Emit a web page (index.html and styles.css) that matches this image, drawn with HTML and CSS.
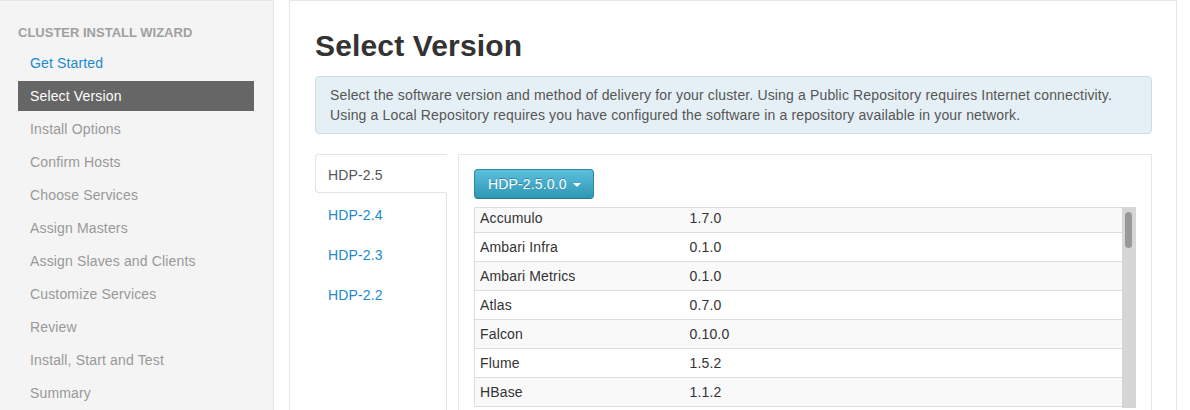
FILE: index.html
```html
<!DOCTYPE html>
<html lang="en">
<head>
    <meta charset="UTF-8">
    <title>Cluster Install Wizard</title>
    <link rel="stylesheet" href="styles.css">
</head>
<body>
    <div id="page">
        <div id="sidebar">
            <div class="nav-header">Cluster Install Wizard</div>
            <ul class="steps">
                <li class="done">Get Started</li>
                <li class="active">Select Version</li>
                <li>Install Options</li>
                <li>Confirm Hosts</li>
                <li>Choose Services</li>
                <li>Assign Masters</li>
                <li>Assign Slaves and Clients</li>
                <li>Customize Services</li>
                <li>Review</li>
                <li>Install, Start and Test</li>
                <li>Summary</li>
            </ul>
        </div>

        <div id="content">
            <h1>Select Version</h1>
            <div class="alert">
                Select the software version and method of delivery for your cluster. Using a Public Repository requires Internet connectivity.
                Using a Local Repository requires you have configured the software in a repository available in your network.
            </div>

            <div class="tabs">
                <ul class="tab-list">
                    <li class="active"><a>HDP-2.5</a></li>
                    <li><a>HDP-2.4</a></li>
                    <li><a>HDP-2.3</a></li>
                    <li><a>HDP-2.2</a></li>
                </ul>

                <div class="tab-pane">
                    <button class="btn-info">HDP-2.5.0.0 <span class="caret"></span></button>

                    <div class="stack-box">
                        <div class="stack-scroll">
                            <table class="stack">
                                <colgroup>
                                    <col class="name-col">
                                    <col>
                                </colgroup>
                                <tbody>
                                    <tr class="first"><td>Accumulo</td><td>1.7.0</td></tr>
                                    <tr><td>Ambari Infra</td><td>0.1.0</td></tr>
                                    <tr><td>Ambari Metrics</td><td>0.1.0</td></tr>
                                    <tr><td>Atlas</td><td>0.7.0</td></tr>
                                    <tr><td>Falcon</td><td>0.10.0</td></tr>
                                    <tr><td>Flume</td><td>1.5.2</td></tr>
                                    <tr><td>HBase</td><td>1.1.2</td></tr>
                                </tbody>
                            </table>
                        </div>
                        <div class="scrollbar"><div class="thumb"></div></div>
                    </div>
                </div>
            </div>
        </div>
    </div>
</body>
</html>
```

FILE: styles.css
```css
body {
    font-family: "Liberation Sans", Arial, sans-serif;
    font-size: 14px;
    line-height: 20px;
    letter-spacing: 0.15px;
    color: #333;
    margin: 0;
    padding: 0;
    background-color: #fff;
    height: 410px;
    overflow: hidden;
}

#page {
    display: flex;
    align-items: stretch;
    gap: 15px;
    padding-right: 13px;
    min-height: 410px;
}

/* left wizard steps */
#sidebar {
    width: 236px;
    flex-shrink: 0;
    background-color: #f4f4f4;
    border-top: 1px solid #e6e6e6;
    border-right: 1px solid #e6e6e6;
    padding: 22px 19px 0 18px;
}

.nav-header {
    font-size: 13px;
    font-weight: bold;
    line-height: 20px;
    letter-spacing: 0;
    color: #a0a0a0;
    text-transform: uppercase;
    margin-bottom: 5px;
}

.steps {
    list-style: none;
    margin: 0;
    padding: 0;
}

.steps li {
    height: 30px;
    line-height: 30px;
    padding-left: 12px;
    margin-bottom: 3px;
    color: #999;
}

.steps li.done {
    color: #1a8acd;
}

.steps li.active {
    background-color: #666;
    color: #fff;
}

/* main panel */
#content {
    flex: 1;
    border: 1px solid #e6e6e6;
    border-bottom: none;
    padding: 0 24px 0 25px;
}

h1 {
    font-size: 30px;
    line-height: 40px;
    font-weight: bold;
    color: #333;
    margin: 25px 0 10px;
}

.alert {
    background-color: #e5f0f6;
    border: 1px solid #cddde5;
    border-radius: 4px;
    color: #555;
    padding: 8px 14px;
    margin-bottom: 20px;
}

.tabs {
    display: flex;
    gap: 11px;
    align-items: stretch;
}

.tab-list {
    list-style: none;
    margin: 0;
    padding: 0;
    width: 131px;
    border-right: 1px solid #e3e3e3;
    min-height: 260px;
}

.tab-list li a {
    display: block;
    padding: 10px 12px 7px;
    margin-right: -1px;
    margin-bottom: 1px;
    border: 1px solid transparent;
    border-radius: 4px 0 0 4px;
    color: #1a8acd;
}

.tab-list li.active a {
    color: #555;
    background-color: #fff;
    border-color: #e3e3e3;
    border-right-color: #fff;
}

.tab-pane {
    flex: 1;
    border: 1px solid #e6e6e6;
    border-bottom: none;
    padding: 14px 15px 0;
}

.btn-info {
    font-family: inherit;
    font-size: 14px;
    line-height: 20px;
    letter-spacing: 0.15px;
    color: #fff;
    text-shadow: 0 -1px 0 rgba(0, 0, 0, 0.25);
    padding: 4px 12px 4px 13px;
    border: 1px solid #2b88a4;
    border-bottom-color: #247891;
    border-radius: 4px;
    background-image: linear-gradient(#5bc0de, #2f96b4);
    margin-bottom: 8px;
}

.caret {
    display: inline-block;
    width: 0;
    height: 0;
    vertical-align: middle;
    border-top: 4px solid #fff;
    border-left: 4px solid transparent;
    border-right: 4px solid transparent;
    margin-left: 2px;
}

.stack-box {
    display: flex;
    height: 201px;
}

.stack-scroll {
    flex: 1;
    overflow: hidden;
}

.stack {
    width: 100%;
    border-collapse: collapse;
    table-layout: fixed;
    border-left: 1px solid #ddd;
    border-bottom: 1px solid #ddd;
}

.name-col {
    width: 210px;
}

.stack td {
    padding: 4px 5px;
    line-height: 20px;
    border-top: 1px solid #ddd;
    color: #333;
}

.stack tr:nth-child(odd) td {
    background-color: #f9f9f9;
}

.stack tr.first td {
    padding-top: 0;
}

.scrollbar {
    width: 14px;
    background-color: #d6d6d6;
    padding-top: 5px;
}

.thumb {
    width: 7px;
    height: 36px;
    margin-left: 3px;
    background-color: #999;
    border-radius: 4px;
}
```
